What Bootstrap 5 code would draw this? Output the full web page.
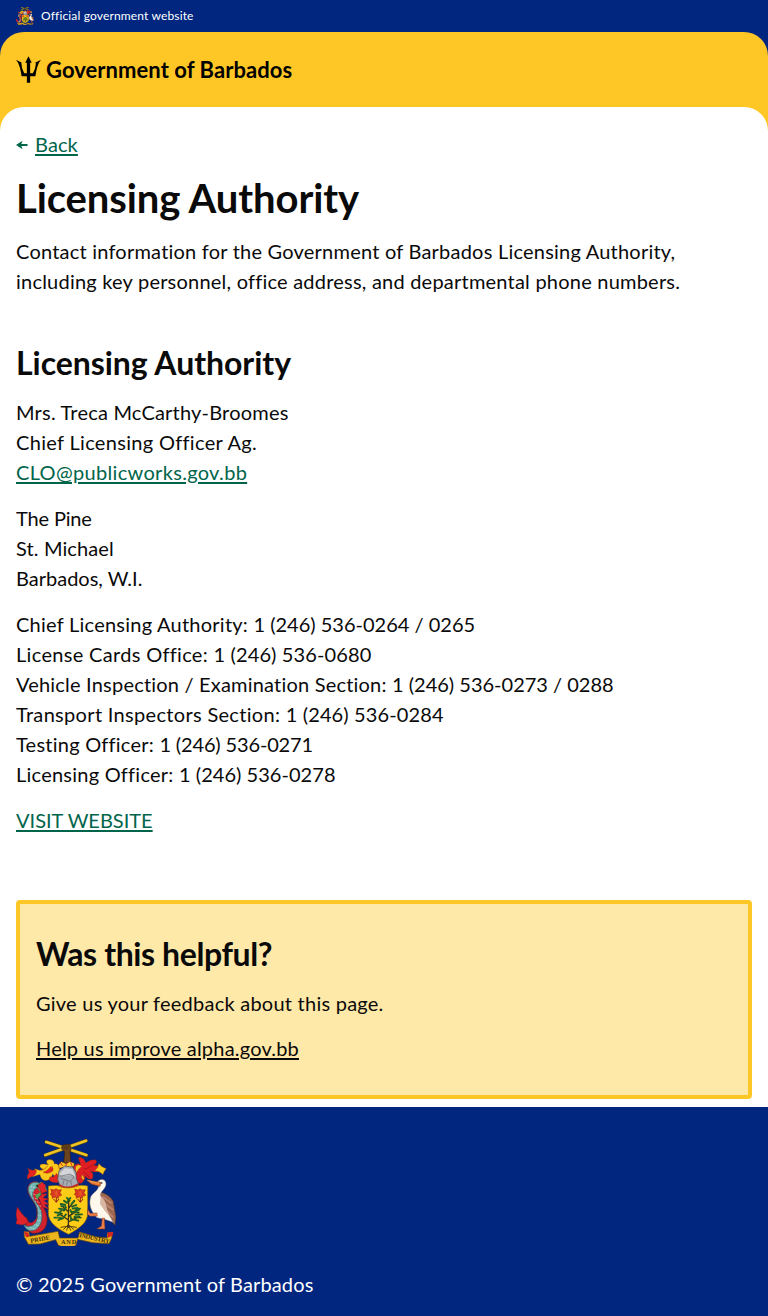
<!DOCTYPE html>
<html lang="en">
<head>
<meta charset="utf-8">
<meta name="viewport" content="width=device-width, initial-scale=1">
<title>Licensing Authority - Government of Barbados</title>
<link href="https://cdn.jsdelivr.net/npm/bootstrap@5.3.0/dist/css/bootstrap.min.css" rel="stylesheet">
<style>
:root{--gov-blue:#00267f;--gov-yellow:#ffc726;--gov-pale:#ffe9a8;--gov-teal:#00654a}
body{font-family:Lato,"Liberation Sans",sans-serif;font-size:20px;line-height:30px;letter-spacing:.2px;color:#0a0a0a;background:#fff}
.bg-gov-blue{background:var(--gov-blue)}
.bg-gov-yellow{background:var(--gov-yellow)}
.official{height:32px;font-size:12px;line-height:18px;gap:7px;letter-spacing:.15px}
.masthead{height:75px;border-radius:24px 24px 0 0;gap:5px}
.brand-name{font-size:22px;font-weight:700;line-height:30px;letter-spacing:.05px;color:#000}
.sheet{border-radius:24px 24px 0 0;height:1000px;padding-top:22px}
.back-row{gap:7px}
.link-gov{color:var(--gov-teal)}
.link-ink{color:#0a0a0a}
a{text-underline-offset:2px;text-decoration-thickness:2px}
h1{font-size:40px;font-weight:700;line-height:46px;letter-spacing:-.1px;margin:16px 0 15px}
h2{font-size:32px;font-weight:700;line-height:40px;letter-spacing:-.05px}
.contact{margin-top:47px}
.contact h2{margin-bottom:14px}
.feedback{border:4px solid var(--gov-yellow);border-radius:4px;background:var(--gov-pale);margin-top:65px;height:199px;padding:30px 16px}
.feedback h2{letter-spacing:-.4px;margin-bottom:14px}
.feedback p{margin-bottom:15px}
.trk-tight{letter-spacing:-.15px}
.trk-none{letter-spacing:0}
.trk-s{letter-spacing:.04px}
.trk-m{letter-spacing:.12px}
.trk-l{letter-spacing:.24px}
.trk-xl{letter-spacing:.32px}
.intro{letter-spacing:.22px}
.site-footer{height:209px;padding-top:32px}
.copyright{margin-top:23px;letter-spacing:.14px}
</style>
</head>
<body>
<svg class="d-none" aria-hidden="true">
<symbol id="crest" viewBox="24 27 303 321" preserveAspectRatio="none">
  <!-- crossed sugar canes and raised hand -->
  <g stroke-linecap="round" fill="none">
    <path d="M112 76L234 32M115 36L235 76" stroke="#5d4710" stroke-width="11"/>
    <path d="M112 75L234 32M115 36L235 75" stroke="#edc326" stroke-width="8"/>
  </g>
  <path d="M160 52l6-8 17-2 5 6 1 10-3 9 3 32h-22l3-33-8-8z" fill="#6b431e" stroke="#35200d" stroke-width="2"/>
  <path d="M168 48v11M174 47v11M180 48v9" stroke="#34200f" stroke-width="1.6"/>
  <!-- mantling -->
  <g stroke="#7b350d" stroke-width="1">
    <path d="M155 112c-4-10-10-13-16-10 0-10-8-16-20-12-6 4-3 10 2 14-8 0-17-5-24 0-4 6 2 11 9 14-7 5-14 2-26-2 1 10-4 18-8 24 10-2 18-6 24-6 1 12 12 20 22 17 10-2 13-10 16-18 6 6 12 12 18 14l4-20z" fill="#fcc81b"/>
    <path d="M59 115c7 4 13 8 25 4 3 8-2 16-10 20-6 2-12 5-14 10-2-8-4-12 2-18 2-6 0-10-3-16zM126 140c8 4 14-2 20-10 6 10 10 18 8 27-12 2-24 0-31-7zM128 110c8 2 10 8 5 14-8 6-18 8-28 2 12-2 16-9 23-16z" fill="#e52421"/>
    <path d="M119 108c-6 8-12 12-21 12M134 108c-2 8-4 14-12 18" fill="none" stroke="#a85c12" stroke-width="2"/>
    <path d="M196 112c6-10 14-14 21-8 0-9-7-15-4-22 12 0 18 8 20 17 8-5 18-11 30-9 6 5 1 12-6 15 7 3 13 3 21 0 5 12-2 20-12 21-8 1-13-2-20-4 10 6 11 15 7 24-9 4-17-1-20-9-1 9-5 17-13 23-10 2-15-4-16-12l-7-12z" fill="#df1e24"/>
    <path d="M272 100c5 8 12 12 23 16-5 5-8 10-10 18-8-8-16-12-26-12 8-5 12-11 13-22z" fill="#fcc81b"/>
    <path d="M204 108c6-5 13-3 18 2-8 2-12 10-16 18-4-6-5-13-2-20zM222 134c5 3 8 10 6 16-6-2-10-8-6-16z" fill="#ffbf22"/>
    <path d="M228 118c10-3 20-6 26-14M226 126c8 4 14 10 18 18" fill="none" stroke="#8f0f18" stroke-width="2"/>
  </g>
  <!-- helmet and wreath -->
  <path d="M152 104l8-9 14 6 12-6 13 5-1 9-17 5-14-2-14 3z" fill="#ffc91f" stroke="#7b260b" stroke-width="1.5"/>
  <path d="M157 98l7 10M176 99l-3 11M188 98l4 9" stroke="#d72820" stroke-width="3"/>
  <path d="M157 171l-8-23 4-26 17-14 24 3 10 16 1 19 7 17-24 9z" fill="#a7abb2" stroke="#464652" stroke-width="2"/>
  <path d="M153 132l18-17 22 2 11 26-14-9-24 5z" fill="#d4d5d8"/>
  <path d="M157 139l29-7 13 8-12 14-29-9M168 151l-4 15M178 154l-2 12M188 153l3 13" stroke="#62616b" stroke-width="2" fill="none"/>
  <path d="M154 161c16 14 38 10 56-1l3 7c-16 13-36 14-57 6z" fill="#c62528"/>
  <!-- shield -->
  <path d="M121 168c14-1 28-4 38 3 14 4 32 4 47-2 10-5 21-3 33-1v80c0 31-24 45-57 65-34-18-61-34-61-65z" fill="#fccc16" stroke="#92650d" stroke-width="2"/>
  <g id="blossom" fill="#d93820" stroke="#931d15" stroke-width="1.5">
    <path d="M128 177l9 3 7-4 7 4 9-1-4 9 5 8-8 2-2 7-8-4-10 4-1-8-5-4 4-6z"/>
    <path d="M138 184l14 12M152 183l-15 14M145 179v22" fill="none" stroke="#f0752a"/>
    <path d="M145 202v14M137 207l8 10 8-10" fill="none" stroke-width="3"/>
  </g>
  <use href="#blossom" x="72"/>
  <!-- bearded fig tree -->
  <g fill="none" stroke-linecap="round">
    <path d="M181 292l1-80M181 270l-29-20M181 260l31-21M181 245l-22-20M182 234l17-20M181 276l33-17" stroke="#38301a" stroke-width="4"/>
    <path d="M181 284l-14 14M182 285l15 13M181 285l-5 16M182 285l6 16M178 289l-19 3M185 289l20 3" stroke="#37290e" stroke-width="2.5"/>
    <path d="M177 204l8 8M187 204l-8 10M168 212l9 7M199 212l-8 9M158 222l13 2M160 229l12-2M153 236l14 2M157 244l10-6M141 247l17 2M149 256l13-5M139 263l20 0M151 270l14-5M205 225l-13 5M209 234l-15 2M216 236l-14 6M212 248l-17-3M222 253l-20 1M218 263l-19-2M211 272l-17-4M174 232l-6 10M187 240l5 10M174 253l-7 8M188 261l2 10" stroke="#205d25" stroke-width="5.500"/>
    <path d="M173 213l5 5M195 217l-7 6M161 226l8 1M155 240l8 0M145 250l9 1M144 262l10 1M207 231l-9 2M215 242l-10 3M213 257l-10 0" stroke="#3e8740" stroke-width="2.5"/>
  </g>
  <!-- dolphinfish -->
  <path d="M94 160c-14-12-35-2-35 18 0 23 24 38 27 60 3 21-1 34-14 39-8 4-13-4-15-14l-10 1-22-3 9 12 17 6c4 22 16 33 32 31 27-3 37-26 34-49-3-32-29-44-26-60 2-13 13-6 16-15z" fill="#cf222c" stroke="#671824" stroke-width="2"/>
  <path d="M89 157c-20-3-31 9-27 29 6 20 24 33 27 56 2 28-5 44-23 47-13 2-20-5-22-17 3 16 10 28 23 30 24 2 38-24 34-52-4-25-27-36-27-57 1-17 13-20 25-26z" fill="#75b5b5" stroke="#2e6876" stroke-width="2"/>
  <path d="M70 170l10 3M66 181l12 2M70 191l12 3M76 204l13 3M82 215l13 2M87 228l12 0M91 241l10 1M91 256l10 1M88 270l11 2M79 283l13 5M66 292l16 6" stroke="#edf1dc" stroke-width="2.500" stroke-dasharray="2 3"/>
  <path d="M82 165l18-10 12 12 5 14-15 8-14 20-7-13 16-9z" fill="#55a654"/>
  <path d="M86 168l16-11 11 8-2 11 7 8-19 7-2-11zM92 203l10-11 16-1-13 12 17 4-14 5 14 11-13 1 13 13-19-6zM56 266l-16-17-12-18-4 22 3 17-4 11 18 4 17-5z" fill="#df252b" stroke="#8b1822" stroke-width="1.5"/>
  <circle cx="88" cy="168" r="3" fill="#18252e"/>
  <!-- pelican -->
  <path d="M270 186c15-1 36 10 46 28l8 47-3 25-16-17-21-16-17-31z" fill="#9b6751" stroke="#422b2b" stroke-width="2"/>
  <path d="M283 200l28 20M279 212l37 28M280 225l36 38" stroke="#bd846d" stroke-width="5"/>
  <path d="M269 155c7-10 25-9 25 7 0 15-19 23-16 35 2 11 15 16 17 32 2 17 13 34 21 48l-26-9-23-5c-16-15-25-37-20-58 3-16 23-20 25-36z" fill="#fff8ec" stroke="#897c78" stroke-width="1.5"/>
  <path d="M278 199c11 9 17 20 16 32l12 30-17-20-13-19z" fill="#d9b6a1"/>
  <path d="M278 157l-42-7 15 13 25 6z" fill="#e77735" stroke="#833317" stroke-width="2"/>
  <path d="M238 151l35 9" stroke="#ffbe63" stroke-width="2"/>
  <circle cx="281" cy="159" r="2.5" fill="#171719"/>
  <path d="M269 258l-22 1-9-6 1-15 8 12 21-1M283 263l-3 25-14 9h25l-2-34" fill="#eb7d48" stroke="#733324" stroke-width="1.5"/>
  <!-- motto ribbon -->
  <path d="M48 304l15 2 2 13 85-15 5 20 55 0 5-18 48 14 34 4 1-15 15-2-2 18-8 16-49-3-45-10-5 18c-16 9-36 7-53 0l-8-17-47 13-35 1-12-22z" fill="#ebb51d" stroke="#694212" stroke-width="2"/>
  <path d="M48 305l13 3 3 12-10 2zM299 307l17 0-2 9-15 8z" fill="#d82420"/>
  <g font-family="Liberation Serif, serif" font-size="19" font-weight="700" fill="#3d2c12">
    <text transform="translate(68 339) rotate(-11)" textLength="60">PRIDE</text>
    <text x="159" y="341" textLength="46">AND</text>
    <text transform="translate(213 321) rotate(12)" textLength="93">INDUSTRY</text>
  </g>
</symbol>
</svg>

<div class="bg-gov-blue">
  <div class="official d-flex align-items-center px-3 text-white">
    <svg width="18" height="18" aria-hidden="true"><use href="#crest"/></svg>
    <span>Official government website</span>
  </div>
  <header class="masthead bg-gov-yellow d-flex align-items-center px-3">
    <svg width="25" height="27" viewBox="48 33 76 81" aria-hidden="true">
      <path d="M86 33L96 53H91V85H99Q109 68 108 52L103 54Q114 50 124 44Q115 54 112 68Q109 80 107 94H91V114H81V94H65Q63 80 60 68Q57 54 48 44Q58 50 69 54L64 52Q64 68 73 85H81V53H76Z"/>
    </svg>
    <span class="brand-name">Government of Barbados</span>
  </header>
</div>
<div class="bg-gov-yellow">
  <main class="sheet bg-white px-3">
    <div class="back-row d-flex align-items-center">
      <svg width="12" height="12" viewBox="0 -2 12 12" class="flex-shrink-0" aria-hidden="true"><path d="M0 5L6.500 .8L5.300 4H11.500V6H5.300L6.500 9.200Z" fill="#00654a"/></svg>
      <a href="#" class="link-gov trk-m">Back</a>
    </div>
    <h1>Licensing Authority</h1>
    <p class="intro mb-0">Contact information for the Government of Barbados Licensing Authority,<br>
      including key personnel, office address, and departmental phone numbers.</p>
    <section class="contact">
      <h2>Licensing Authority</h2>
      <p class="mb-3">Mrs. Treca McCarthy-Broomes<br><span class="trk-xl">Chief Licensing Officer Ag.</span><br><a href="#" class="link-gov trk-xl">CLO@publicworks.gov.bb</a></p>
      <p class="mb-3"><span class="trk-tight">The Pine</span><br><span class="trk-m">St. Michael</span><br><span class="trk-none">Barbados, W.I.</span></p>
      <p class="mb-3"><span class="trk-l">Chief Licensing Authority: </span><span class="trk-none">1 (246) 536-0264 / 0265</span><br>
        <span class="trk-xl">License Cards Office: </span><span class="trk-m">1 (246) 536-0680</span><br>
        <span>Vehicle Inspection / Examination Section: </span><span class="trk-none">1 (246) 536-0273 / 0288</span><br>
        <span class="trk-xl">Transport Inspectors Section: </span><span class="trk-m">1 (246) 536-0284</span><br>
        <span class="trk-l">Testing Officer: </span><span class="trk-tight">1 (246) 536-0271</span><br>
        <span class="trk-l">Licensing Officer: </span><span class="trk-s">1 (246) 536-0278</span></p>
      <p class="mb-0"><a href="#" class="link-gov trk-none">VISIT WEBSITE</a></p>
    </section>
    <section class="feedback">
      <h2>Was this helpful?</h2>
      <p class="trk-l">Give us your feedback about this page.</p>
      <a href="#" class="link-ink">Help us improve alpha.gov.bb</a>
    </section>
  </main>
</div>
<footer class="site-footer bg-gov-blue text-white px-3">
  <svg width="101" height="107" class="d-block" role="img" aria-label="Coat of arms of Barbados"><use href="#crest"/></svg>
  <p class="copyright mb-0">© 2025 Government of Barbados</p>
</footer>
<script src="https://cdn.jsdelivr.net/npm/bootstrap@5.3.0/dist/js/bootstrap.bundle.min.js"></script>
</body>
</html>
